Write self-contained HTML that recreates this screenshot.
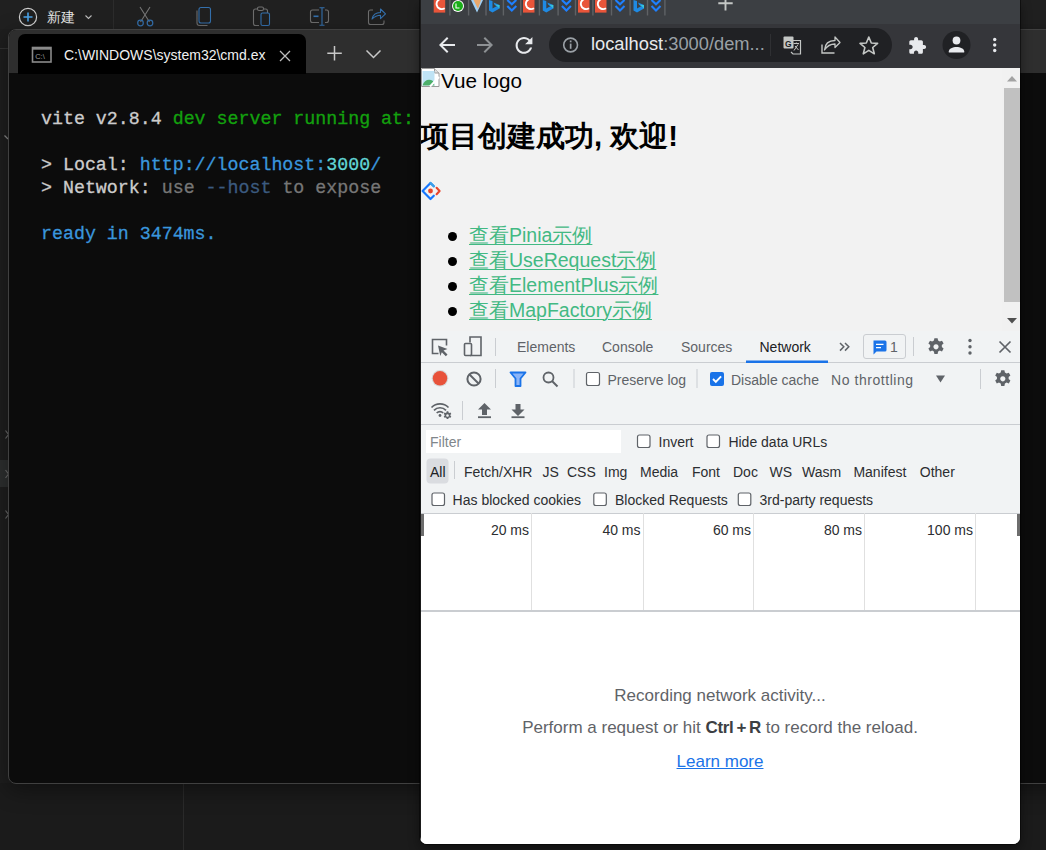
<!DOCTYPE html>
<html><head><meta charset="utf-8">
<style>
*{margin:0;padding:0;box-sizing:border-box}
html,body{width:1046px;height:850px;overflow:hidden;background:#1e1e1e;font-family:"Liberation Sans",sans-serif;position:relative}
.a{position:absolute}
svg{position:absolute;overflow:visible}
/* explorer */
#exp{left:0;top:0;width:1046px;height:850px;background:#1b1b1b}
#exp .tb{left:0;top:0;width:1046px;height:29px;background:#202020}
/* terminal */
#term{left:8px;top:29px;width:1060px;height:755px;background:#0c0c0c;border:1px solid #404040;border-radius:8px;overflow:hidden;box-shadow:0 6px 22px rgba(0,0,0,.4)}
#term .strip{left:0;top:0;width:100%;height:43px;background:#2e2e2e}
#term .tab{left:9px;top:4px;width:288px;height:40px;background:#000;border-radius:7px 7px 0 0}
.mono{font-family:"Liberation Mono",monospace;-webkit-text-stroke:0.3px currentColor;font-size:18.3px;line-height:23px;white-space:pre;color:#cccccc}
/* browser */
#br{left:420px;top:0;width:600px;height:844px;background:#fff;border-radius:0 0 7px 7px;overflow:hidden;box-shadow:0 0 0 1px rgba(0,0,0,.45),0 5px 12px rgba(0,0,0,.45)}
.li{position:relative;height:25px;padding-left:21px;white-space:nowrap;color:#42b983}
.li u{text-decoration-thickness:1px;text-underline-offset:2px}
.dot{position:absolute;left:0;top:8.5px;width:9px;height:9px;border-radius:50%;background:#000}
#br .tabs{left:0;top:0;width:100%;height:24px;background:#3c3f43}
#br .tool{left:0;top:24px;width:100%;height:44px;background:#35363a}
#br .omni{left:129px;top:4px;width:343px;height:34px;background:#202124;border-radius:17px}
#br .page{left:0;top:68px;width:100%;height:263px;background:#f2f2f2;overflow:hidden}
#br .dev{left:0;top:331px;width:100%;height:513px;background:#fff}
.dt{font-size:14px;line-height:16px;color:#5f6368;white-space:nowrap}
.tl{text-align:right;color:#2c2e31}
.emp{text-align:center;font-size:17px;line-height:20px;color:#5f6368;white-space:nowrap}
.emp b{color:#3c4043;letter-spacing:-0.3px;word-spacing:-1.5px}
</style></head>
<body>
<div id="exp" class="a">
  <div class="tb a"></div>
  <div class="a" style="left:0;top:29px;width:10px;height:754px;background:#1e1e1e"></div>
  <!-- top toolbar -->
  <svg style="left:0;top:0" width="420" height="30">
    <circle cx="28" cy="17" r="8.6" fill="none" stroke="#cfcfcf" stroke-width="1.2"/>
    <path d="M28 12.5v9M23.5 17h9" stroke="#4aa3e8" stroke-width="1.6"/>
    <path d="M85.5 15.5l3 3 3-3" fill="none" stroke="#bdbdbd" stroke-width="1.1"/>
    <line x1="113.5" y1="0" x2="113.5" y2="29" stroke="#2c2c2c"/>
    <!-- scissors -->
    <path d="M140 7l9.5 15M150 7l-9.5 15" stroke="#767676" stroke-width="1.1"/>
    <circle cx="140.5" cy="23" r="2.8" fill="none" stroke="#3470ad" stroke-width="1.2"/>
    <circle cx="150" cy="23" r="2.8" fill="none" stroke="#3470ad" stroke-width="1.2"/>
    <!-- copy -->
    <path d="M197 10.5v12.5a2.5 2.5 0 0 0 2.5 2.5h8" fill="none" stroke="#6e6e6e" stroke-width="1.1"/>
    <rect x="199" y="7.5" width="11.5" height="15.5" rx="2" fill="none" stroke="#3470ad" stroke-width="1.1"/>
    <!-- paste -->
    <path d="M257 9h-1.5a2 2 0 0 0 -2 2v12.5a2 2 0 0 0 2 2h3.5M264 9h1.5a2 2 0 0 1 2 2v2" fill="none" stroke="#6e6e6e" stroke-width="1.1"/>
    <rect x="257.5" y="7" width="6" height="3.5" rx="1.5" fill="none" stroke="#6e6e6e" stroke-width="1.1"/>
    <rect x="261" y="13" width="8.5" height="12.5" rx="1.5" fill="none" stroke="#3470ad" stroke-width="1.1"/>
    <!-- rename -->
    <path d="M319 10h-6.5a2 2 0 0 0 -2 2v8.5a2 2 0 0 0 2 2h6.5M325 10h1.5a2 2 0 0 1 2 2v8.5a2 2 0 0 1 -2 2h-1.5" fill="none" stroke="#6e6e6e" stroke-width="1.1"/>
    <path d="M322 8v17M319.5 7.8h5M319.5 25.2h5" stroke="#3470ad" stroke-width="1.1"/>
    <path d="M313.5 16.3h5" stroke="#3470ad" stroke-width="1.6"/>
    <!-- share -->
    <path d="M373 10h-2.5a2 2 0 0 0 -2 2v10.5a2 2 0 0 0 2 2h11.5a2 2 0 0 0 2 -2v-2" fill="none" stroke="#6e6e6e" stroke-width="1.1"/>
    <path d="M372 19c1-4.5 4.5-6.5 8.5-6.5v-3.5l5 4.8-5 4.8v-3.3c-3.5 0-6 1.3-8.5 3.7z" fill="none" stroke="#3470ad" stroke-width="1.1" stroke-linejoin="round"/>
  </svg>
  <div class="a" style="left:47px;top:9px;font-size:14px;color:#e6e6e6">新建</div>
  <!-- sidebar bits -->
  <div class="a" style="left:0;top:48px;width:8px;height:1px;background:#333"></div>
  <div class="a" style="left:0;top:460px;width:8px;height:27px;background:#2d2f2f"></div>
  <svg style="left:0;top:0" width="9" height="850">
    <path d="M4.5 135.5l3.5 3.5" stroke="#8a8a8a" stroke-width="1.2"/>
    <path d="M5.5 430.5l3 4-3 4M5.5 470l3 4-3 4M5.5 510.5l3 4-3 4" fill="none" stroke="#6a6a6a" stroke-width="1.2"/>
  </svg>
  <div class="a" style="left:183px;top:783px;width:1px;height:67px;background:#2a2a2a"></div>
</div>

<div id="term" class="a">
  <div class="strip a"></div>
  <div class="tab a"></div>
  <svg style="left:0;top:0" width="420" height="44">
    <rect x="23.5" y="17.5" width="18.5" height="14.5" fill="none" stroke="#8a8a8a" stroke-width="1.6"/>
    <rect x="23.5" y="17.5" width="18.5" height="2.2" fill="#8a8a8a"/>
    <text x="26.2" y="29" font-size="7.5" fill="#9a9a9a" font-family="Liberation Sans">C:\</text>
    <path d="M271 21l10 10M281 21l-10 10" stroke="#bdbdbd" stroke-width="1.3"/>
    <path d="M325.5 16v14.5M318.3 23.3h14.5" stroke="#c8c8c8" stroke-width="1.5"/>
    <path d="M357.5 20.5l7 7 7-7" fill="none" stroke="#c8c8c8" stroke-width="1.5"/>
  </svg>
  <div class="a" style="left:55px;top:17px;font-size:14px;color:#f0f0f0;white-space:nowrap">C:\WINDOWS\system32\cmd.ex</div>
  <div class="a mono" style="left:32px;top:78px"><span>vite v2.8.4 </span><span style="color:#13a10e">dev server running at:</span>

<span>&gt; Local: </span><span style="color:#3a96dd">http://localhost:<span style="color:#61d6d6">3000</span>/</span>
<span>&gt; Network: </span><span style="color:#767676">use </span><span style="color:#3b5a7f">--host</span><span style="color:#767676"> to expose</span>

<span style="color:#3a96dd">ready in 3474ms.</span></div>
</div>

<div id="br" class="a">
  <div class="tabs a">
    <svg style="left:0;top:0" width="600" height="24">
<rect x="13.7" y="0" width="11.5" height="12.6" fill="#e9553a"/><path d="M22.7 -1.2 A5.2 5.2 0 1 0 24.7 8.2" fill="none" stroke="#fff" stroke-width="1.9"/>
<circle cx="38.0" cy="6" r="6" fill="#fff"/><circle cx="38.0" cy="6" r="5" fill="#1aad19"/><path d="M36.0 3.5v4.5h3.5" fill="none" stroke="#fff" stroke-width="1.1"/>
<path d="M51.0 0 L63.0 0 L57.0 12.5 Z" fill="#9ecff5"/><path d="M53.5 0 L61.0 0 L58.0 9 Z" fill="#e8a76b"/>
<path d="M69.0 0 L72.5 1 L72.5 8.5 L77.0 6 L74.5 4.8 L73.5 2.6 L79.5 5 L79.5 8.5 L72.5 12.5 L69.0 10.5 Z" fill="#1f8ae3"/><path d="M74.5 4.8 L79.5 5 L79.5 8.5 L77.0 6 Z" fill="#37c5d8"/>
<path d="M87.3 0 L91.8 4.3 L96.3 0 M87.3 6 L91.8 10.5 L96.3 6" fill="none" stroke="#1e80ff" stroke-width="2.1"/>
<rect x="103.0" y="0" width="11.5" height="12.6" fill="#e9553a"/><path d="M112.0 -1.2 A5.2 5.2 0 1 0 114.0 8.2" fill="none" stroke="#fff" stroke-width="1.9"/>
<path d="M122.8 0 L126.3 1 L126.3 8.5 L130.8 6 L128.3 4.8 L127.3 2.6 L133.3 5 L133.3 8.5 L126.3 12.5 L122.8 10.5 Z" fill="#1f8ae3"/><path d="M128.3 4.8 L133.3 5 L133.3 8.5 L130.8 6 Z" fill="#37c5d8"/>
<path d="M141.9 0 L146.4 4.3 L150.9 0 M141.9 6 L146.4 10.5 L150.9 6" fill="none" stroke="#1e80ff" stroke-width="2.1"/>
<rect x="158.0" y="0" width="11.5" height="12.6" fill="#e9553a"/><path d="M167.0 -1.2 A5.2 5.2 0 1 0 169.0 8.2" fill="none" stroke="#fff" stroke-width="1.9"/>
<rect x="175.0" y="0" width="11.5" height="12.6" fill="#e9553a"/><path d="M184.0 -1.2 A5.2 5.2 0 1 0 186.0 8.2" fill="none" stroke="#fff" stroke-width="1.9"/>
<path d="M195.5 0 L200.0 4.3 L204.5 0 M195.5 6 L200.0 10.5 L204.5 6" fill="none" stroke="#1e80ff" stroke-width="2.1"/>
<path d="M213.5 0 L217.0 1 L217.0 8.5 L221.5 6 L219.0 4.8 L218.0 2.6 L224.0 5 L224.0 8.5 L217.0 12.5 L213.5 10.5 Z" fill="#1f8ae3"/><path d="M219.0 4.8 L224.0 5 L224.0 8.5 L221.5 6 Z" fill="#37c5d8"/>
<path d="M231.5 0 L236.0 4.3 L240.5 0 M231.5 6 L236.0 10.5 L240.5 6" fill="none" stroke="#1e80ff" stroke-width="2.1"/>
<rect x="29.2" y="0" width="1.4" height="15.5" fill="#5f6265"/>
<rect x="47.9" y="0" width="1.4" height="15.5" fill="#5f6265"/>
<rect x="65.3" y="0" width="1.4" height="15.5" fill="#5f6265"/>
<rect x="82.7" y="0" width="1.4" height="15.5" fill="#5f6265"/>
<rect x="100.1" y="0" width="1.4" height="15.5" fill="#5f6265"/>
<rect x="118.7" y="0" width="1.4" height="15.5" fill="#5f6265"/>
<rect x="137.4" y="0" width="1.4" height="15.5" fill="#5f6265"/>
<rect x="154.8" y="0" width="1.4" height="15.5" fill="#5f6265"/>
<rect x="172.2" y="0" width="1.4" height="15.5" fill="#5f6265"/>
<rect x="190.8" y="0" width="1.4" height="15.5" fill="#5f6265"/>
<rect x="209.4" y="0" width="1.4" height="15.5" fill="#5f6265"/>
<rect x="226.8" y="0" width="1.4" height="15.5" fill="#5f6265"/>
<rect x="244.2" y="0" width="1.4" height="15.5" fill="#5f6265"/>
    <path d="M305.5 -3v13.5M298.3 3.2h14.4" stroke="#c4c7c5" stroke-width="1.9"/>
    </svg>
  </div>
  <div class="tool a">
    <svg style="left:0;top:0" width="600" height="44">
      <path transform="translate(15,9)" d="M20 11H7.83l5.59-5.59L12 4l-8 8 8 8 1.41-1.41L7.83 13H20v-2z" fill="#e8eaed"/>
      <path transform="translate(53,9)" d="M12 4l-1.41 1.41L16.17 11H4v2h12.17l-5.58 5.59L12 20l8-8z" fill="#8e9194"/>
      <path transform="translate(91.4,8.8) scale(1.05)" d="M17.65 6.35C16.2 4.9 14.21 4 12 4c-4.42 0-7.99 3.58-7.99 8s3.57 8 7.99 8c3.73 0 6.84-2.55 7.73-6h-2.08c-.82 2.330-3.04 4-5.65 4-3.31 0-6-2.69-6-6s2.69-6 6-6c1.66 0 3.14.69 4.22 1.78L13 11h7V4l-2.35 2.35z" fill="#e8eaed"/>
    </svg>
    <div class="omni a">
      <svg style="left:0;top:0" width="342" height="34">
        <circle cx="21.6" cy="17" r="6.9" fill="none" stroke="#9aa0a6" stroke-width="1.6"/>
        <rect x="20.8" y="15.6" width="1.7" height="5.2" fill="#9aa0a6"/><rect x="20.8" y="12.5" width="1.7" height="1.8" fill="#9aa0a6"/>
        <line x1="221.5" y1="6" x2="221.5" y2="28" stroke="#2f3033" stroke-width="1"/>
        <!-- translate -->
        <rect x="234.5" y="8.5" width="10" height="12" rx="1" fill="#c4c7c5"/>
        <path d="M241 12.5h10.5v13.5h-7.5l-2 -2" fill="none" stroke="#c4c7c5" stroke-width="1.2"/>
        <text x="236" y="18.5" font-size="8.5" font-weight="bold" fill="#202124" font-family="Liberation Sans">G</text>
        <path d="M244.5 15.5h5.5M247.3 14.5v1.5M245 22.5l4-6M246 18l3.5 4" fill="none" stroke="#c4c7c5" stroke-width="1"/>
        <!-- share -->
        <path d="M273 16.5v8.5h12.5" fill="none" stroke="#c4c7c5" stroke-width="1.4"/>
        <path d="M275.5 22 C276 15.5 280 12.5 286 12.5 V9 L291 14.5 L286 19.5 V16 C281.5 16 278 18 275.5 22 Z" fill="none" stroke="#c4c7c5" stroke-width="1.3" stroke-linejoin="round"/>
        <!-- star -->
        <path d="M319.8 9 L322.3 15 L328.6 15.4 L323.7 19.5 L325.3 25.8 L319.8 22.3 L314.3 25.8 L315.9 19.5 L311 15.4 L317.3 15 Z" fill="none" stroke="#c4c7c5" stroke-width="1.6" stroke-linejoin="round"/>
      </svg>
      <div class="a" style="left:42px;top:5.2px;font-size:18.3px;color:#e8eaed;white-space:nowrap">localhost<span style="color:#9aa0a6">:3000/dem...</span></div>
    </div>
    <svg style="left:0;top:0" width="600" height="44">
      <!-- puzzle -->
      <path transform="translate(487.7,12.2) scale(.8)" d="M20.5 11H19V7c0-1.1-.9-2-2-2h-4V3.5C13 2.120 11.88 1 10.5 1S8 2.12 8 3.5V5H4c-1.1 0-1.99.9-1.99 2v3.8H3.5c1.49 0 2.7 1.21 2.7 2.7s-1.21 2.7-2.7 2.7H2V20c0 1.1.9 2 2 2h3.8v-1.5c0-1.49 1.21-2.7 2.7-2.7 1.49 0 2.7 1.21 2.7 2.7V22H17c1.1 0 2-.9 2-2v-4h1.5c1.38 0 2.5-1.12 2.5-2.5S21.88 11 20.5 11z" fill="#e8eaed"/>
      <circle cx="536.5" cy="21" r="14" fill="#202124"/>
      <circle cx="536.5" cy="16.5" r="3.9" fill="#e8eaed"/>
      <path d="M528.8 28.5v-1.2c0-2.8 4-4.4 7.7-4.4s7.7 1.6 7.7 4.4v1.2z" fill="#e8eaed"/>
      <circle cx="574.7" cy="15.5" r="1.7" fill="#e8eaed"/><circle cx="574.7" cy="21" r="1.7" fill="#e8eaed"/><circle cx="574.7" cy="26.5" r="1.7" fill="#e8eaed"/>
    </svg>
  </div>
  <div class="page a">
    <svg style="left:1px;top:0" width="20" height="19">
      <path d="M0.5 0.5h13l4.5 4.5v13.5h-17.5z" fill="#fff" stroke="#9a9a9a" stroke-width="1"/>
      <path d="M13.5 0.5v4.5h4.5" fill="#ddd" stroke="#9a9a9a" stroke-width="1"/>
      <rect x="1.5" y="3" width="12" height="14.5" fill="#bfe3f5"/>
      <path d="M1.5 17.5 C3 12 8 10.5 12 13 L13.5 17.5z" fill="#4caf6a"/>
      <path d="M9 18.5 L18 9" stroke="#fff" stroke-width="2"/>
    </svg>
    <div class="a" style="left:21px;top:0.5px;font-size:20.7px;color:#000;white-space:nowrap">Vue logo</div>
    <div class="a" style="left:0;top:49px;font-size:29.2px;font-weight:bold;color:#000;white-space:nowrap">项目创建成功, 欢迎!</div>
    <svg style="left:1px;top:113px" width="22" height="22">
      <path d="M12.8 5.3 L9.5 2 L1.6 10 L9.5 18 L12.8 14.7" fill="none" stroke="#1677ff" stroke-width="2.2" stroke-linecap="round" stroke-linejoin="round"/>
      <path d="M9.5 2 L12.8 5.3" stroke="#3aa0e8" stroke-width="2.2" stroke-linecap="round"/>
      <path d="M15.6 6.8 L18.6 10 L15.6 13.2" fill="none" stroke="#e8452c" stroke-width="2.1" stroke-linecap="round" stroke-linejoin="round"/>
      <circle cx="9.5" cy="10" r="2.4" fill="#e8452c"/>
    </svg>
    <div class="a" style="left:28px;top:155px;font-size:19.5px;line-height:25px;color:#000">
      <div class="li"><span class="dot"></span><u>查看Pinia示例</u></div>
      <div class="li"><span class="dot"></span><u>查看UseRequest示例</u></div>
      <div class="li"><span class="dot"></span><u>查看ElementPlus示例</u></div>
      <div class="li"><span class="dot"></span><u>查看MapFactory示例</u></div>
    </div>
    <div class="a" style="left:582px;top:0;width:18px;height:263px;background:#f1f1f1"></div>
    <div class="a" style="left:584px;top:20px;width:16px;height:214px;background:#c1c1c1"></div>
    <svg style="left:582px;top:0" width="18" height="263">
      <path d="M5 13.5h10l-5-5.5z" fill="#a3a3a3"/>
      <path d="M5 250h10l-5 5.5z" fill="#505050"/>
    </svg>
  </div>
  <div class="dev a">
    <!-- tab bar: y 331-362 -->
    <div class="a" style="left:0;top:0;width:600px;height:32px;background:#f1f3f4;border-bottom:1px solid #cacdd1"></div>
    <svg style="left:0;top:0" width="600" height="32">
      <!-- inspect -->
      <path d="M18.5 22.5h-6v-14h14v6" fill="none" stroke="#5f6368" stroke-width="1.6"/>
      <path d="M18 14.5 L27.5 18 L23.5 19.5 L27.5 23.5 L25.8 25.2 L21.8 21.2 L20.3 25 Z" fill="#5f6368"/>
      <!-- device -->
      <path d="M50 11.5v-5.5h11v18.5h-11" fill="none" stroke="#5f6368" stroke-width="1.6"/>
      <rect x="44.5" y="12.5" width="7" height="12" rx="1" fill="none" stroke="#5f6368" stroke-width="1.6"/>
      <rect x="75" y="7" width="1" height="18" fill="#cacdd1"/>
      <rect x="326" y="29.5" width="82" height="2.5" fill="#1a73e8"/>
      <path d="M420 12l3.8 3.8-3.8 3.8M425 12l3.8 3.8-3.8 3.8" fill="none" stroke="#5f6368" stroke-width="1.5"/>
      <rect x="443.5" y="3.5" width="42" height="24" rx="2.5" fill="none" stroke="#cacdd1" stroke-width="1"/>
      <path d="M453.5 9.5h11.5a1.5 1.5 0 0 1 1.5 1.5v8a1.5 1.5 0 0 1 -1.5 1.5h-8.5l-3 3z" fill="#1a73e8"/>
      <path d="M456 13.3h7.5M456 16.7h5" stroke="#fff" stroke-width="1.3"/>
      <rect x="493" y="6" width="1" height="19" fill="#cacdd1"/>
      <!-- gear -->
      <g transform="translate(516,15.8)"><path id="gear" d="M-1.6 -8.5h3.2l.5 2.3a6 6 0 0 1 1.7 1l2.2-.8 1.6 2.8-1.8 1.5a6 6 0 0 1 0 2l1.8 1.5-1.6 2.8-2.2-.8a6 6 0 0 1 -1.7 1l-.5 2.3h-3.2l-.5-2.3a6 6 0 0 1 -1.7 -1l-2.2 .8-1.6-2.8 1.8-1.5a6 6 0 0 1 0 -2l-1.8-1.5 1.6-2.8 2.2 .8a6 6 0 0 1 1.7 -1z M0 -2.6a2.6 2.6 0 1 0 .01 0z" fill="#5f6368" fill-rule="evenodd"/></g>
      <circle cx="550" cy="9.5" r="1.7" fill="#5f6368"/><circle cx="550" cy="15.8" r="1.7" fill="#5f6368"/><circle cx="550" cy="22" r="1.7" fill="#5f6368"/>
      <path d="M579.5 10.5l11 11M590.5 10.5l-11 11" stroke="#5f6368" stroke-width="1.7"/>
    </svg>
    <div class="a dt" style="left:97px;top:8px">Elements</div>
    <div class="a dt" style="left:182px;top:8px">Console</div>
    <div class="a dt" style="left:261px;top:8px">Sources</div>
    <div class="a dt" style="left:339.5px;top:8px;color:#202124">Network</div>
    <div class="a dt" style="left:470px;top:8px;color:#5f6368">1</div>

    <!-- toolbar 1: y 362-395 -->
    <div class="a" style="left:0;top:32px;width:600px;height:62px;background:#f1f3f4;border-bottom:1px solid #cacdd1"></div>
    <svg style="left:0;top:32px" width="600" height="62">
      <circle cx="20" cy="15.3" r="8.3" fill="#d6d6d6"/>
      <circle cx="20" cy="15.3" r="7.2" fill="#e8523a"/>
      <circle cx="54" cy="16" r="6.6" fill="none" stroke="#5f6368" stroke-width="2"/>
      <path d="M49.5 11.5l9 9" stroke="#5f6368" stroke-width="2"/>
      <rect x="75" y="6" width="1" height="19" fill="#cacdd1"/>
      <path d="M90.5 9.5h15l-5 6v7.5h-5v-7.5z" fill="#8ab4f8" stroke="#1a73e8" stroke-width="1.8" stroke-linejoin="round"/>
      <circle cx="128.5" cy="14.5" r="5" fill="none" stroke="#5f6368" stroke-width="1.8"/>
      <path d="M132 18l5.5 5.5" stroke="#5f6368" stroke-width="2"/>
      <rect x="153.5" y="6" width="1" height="19" fill="#cacdd1"/>
      <rect x="166.5" y="9.5" width="13" height="13" rx="2" fill="#fff" stroke="#5f6368" stroke-width="1.2"/>
      <rect x="276.5" y="6" width="1" height="19" fill="#cacdd1"/>
      <rect x="290" y="9" width="14" height="14" rx="2" fill="#1a73e8"/>
      <path d="M293 16l2.8 2.8 5.3-5.5" fill="none" stroke="#fff" stroke-width="1.9"/>
      <path d="M516 12.5h9l-4.5 7z" fill="#5f6368"/>
      <rect x="560" y="6" width="1" height="20" fill="#cacdd1"/>
      <g transform="translate(582.8,15.8)"><use href="#gear"/></g>
      <!-- row 2 -->
      <path d="M11.5 44.5a12 12 0 0 1 17 0M14 47.3a8.3 8.3 0 0 1 12 0M16.7 50a4.5 4.5 0 0 1 6.5 0" fill="none" stroke="#5f6368" stroke-width="1.7"/>
      <circle cx="20" cy="52.5" r="1.4" fill="#5f6368"/>
      <g transform="translate(27.5,52.5) scale(.5)"><use href="#gear"/></g>
      <rect x="42" y="38" width="1" height="19" fill="#cacdd1"/>
      <path d="M64.5 40l-6.5 6.5h4v5.5h5v-5.5h4z" fill="#5f6368"/><rect x="58" y="53.3" width="13" height="1.8" fill="#5f6368"/>
      <path d="M98 53l-6.5-6.5h4v-5.5h5v5.5h4z" fill="#5f6368"/><rect x="91.5" y="53.3" width="13" height="1.8" fill="#5f6368"/>
    </svg>
    <div class="a dt" style="left:187.5px;top:40.5px">Preserve log</div>
    <div class="a dt" style="left:311px;top:40.5px">Disable cache</div>
    <div class="a dt" style="left:411px;top:40.5px;letter-spacing:0.55px">No throttling</div>

    <!-- filter row: y 425-513 -->
    <div class="a" style="left:0;top:94px;width:600px;height:89px;background:#f1f3f4;border-bottom:1px solid #cacdd1"></div>
    <div class="a" style="left:6px;top:99px;width:195px;height:23px;background:#fff"></div>
    <div class="a dt" style="left:10px;top:103px;color:#80868b">Filter</div>
    <svg style="left:0;top:94px" width="600" height="88">
      <rect x="217.5" y="10" width="12.5" height="12.5" rx="2" fill="#fff" stroke="#5f6368" stroke-width="1.2"/>
      <rect x="287" y="10" width="12.5" height="12.5" rx="2" fill="#fff" stroke="#5f6368" stroke-width="1.2"/>
      <rect x="6.5" y="33.5" width="22" height="25" rx="4" fill="#dadce0"/>
      <rect x="34" y="36" width="1" height="18" fill="#cacdd1"/>
      <rect x="12" y="68" width="12.5" height="12.5" rx="2" fill="#fff" stroke="#5f6368" stroke-width="1.2"/>
      <rect x="173.8" y="68" width="12.5" height="12.5" rx="2" fill="#fff" stroke="#5f6368" stroke-width="1.2"/>
      <rect x="318.3" y="68" width="12.5" height="12.5" rx="2" fill="#fff" stroke="#5f6368" stroke-width="1.2"/>
    </svg>
    <div class="a dt" style="left:238.5px;top:103px;color:#2c2e31">Invert</div>
    <div class="a dt" style="left:308.4px;top:103px;color:#2c2e31">Hide data URLs</div>
    <div class="a dt" style="left:10px;top:133.2px;color:#202124">All</div>
    <div class="a dt" style="left:44px;top:133.2px;color:#2c2e31">Fetch/XHR</div>
    <div class="a dt" style="left:122.6px;top:133.2px;color:#2c2e31">JS</div>
    <div class="a dt" style="left:147px;top:133.2px;color:#2c2e31">CSS</div>
    <div class="a dt" style="left:184px;top:133.2px;color:#2c2e31">Img</div>
    <div class="a dt" style="left:220px;top:133.2px;color:#2c2e31">Media</div>
    <div class="a dt" style="left:272px;top:133.2px;color:#2c2e31">Font</div>
    <div class="a dt" style="left:313px;top:133.2px;color:#2c2e31">Doc</div>
    <div class="a dt" style="left:349.6px;top:133.2px;color:#2c2e31">WS</div>
    <div class="a dt" style="left:382px;top:133.2px;color:#2c2e31">Wasm</div>
    <div class="a dt" style="left:433.4px;top:133.2px;color:#2c2e31">Manifest</div>
    <div class="a dt" style="left:499.8px;top:133.2px;color:#2c2e31">Other</div>
    <div class="a dt" style="left:32.6px;top:161px;color:#2c2e31">Has blocked cookies</div>
    <div class="a dt" style="left:195px;top:161px;color:#2c2e31">Blocked Requests</div>
    <div class="a dt" style="left:339.5px;top:161px;color:#2c2e31">3rd-party requests</div>

    <!-- timeline y 513-611 -->
    <div class="a" style="left:0;top:183px;width:600px;height:98px;background:#fff;border-bottom:2px solid #cacdd1"></div>
    <div class="a" style="left:1px;top:183px;width:3px;height:22px;background:#6d6d6d"></div>
    <div class="a" style="left:597px;top:183px;width:3px;height:22px;background:#6d6d6d"></div>
    <div class="a" style="left:111px;top:182px;width:1px;height:97px;background:#e0e0e0"></div>
    <div class="a" style="left:222.5px;top:182px;width:1px;height:97px;background:#e0e0e0"></div>
    <div class="a" style="left:333px;top:182px;width:1px;height:97px;background:#e0e0e0"></div>
    <div class="a" style="left:444px;top:182px;width:1px;height:97px;background:#e0e0e0"></div>
    <div class="a" style="left:555px;top:182px;width:1px;height:97px;background:#e0e0e0"></div>
    <div class="a dt tl" style="left:0;width:109px;top:191px">20 ms</div>
    <div class="a dt tl" style="left:0;width:220.5px;top:191px">40 ms</div>
    <div class="a dt tl" style="left:0;width:331px;top:191px">60 ms</div>
    <div class="a dt tl" style="left:0;width:442px;top:191px">80 ms</div>
    <div class="a dt tl" style="left:0;width:553px;top:191px">100 ms</div>

    <div class="a emp" style="left:0;top:354.5px;width:600px">Recording network activity...</div>
    <div class="a emp" style="left:0;top:386.5px;width:600px">Perform a request or hit <b>Ctrl + R</b> to record the reload.</div>
    <div class="a emp" style="left:0;top:421px;width:600px"><u style="color:#1a73e8">Learn more</u></div>
  </div>
  <div class="a" style="left:0;top:0;width:1px;height:844px;background:#1b1b1b"></div>
</div>
</body></html>
